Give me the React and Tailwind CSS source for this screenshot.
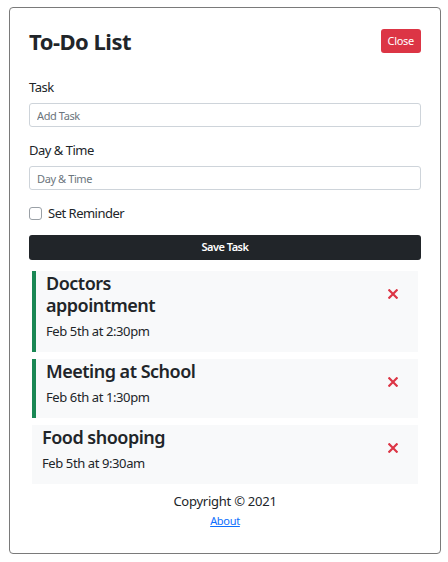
import { useState } from 'react'

const TASKS = [
  { id: 1, text: 'Doctors appointment', day: 'Feb 5th at 2:30pm', reminder: true },
  { id: 2, text: 'Meeting at School', day: 'Feb 6th at 1:30pm', reminder: true },
  { id: 3, text: 'Food shooping', day: 'Feb 5th at 9:30am', reminder: false },
]

function XIcon() {
  return (
    <svg width="10" height="10" viewBox="0 0 10 10" className="block shrink-0">
      <path d="M1.3 1.3 L8.7 8.7 M8.7 1.3 L1.3 8.7" stroke="#dc3545" strokeWidth="2.2" strokeLinecap="square" />
    </svg>
  )
}

function Task({ task }) {
  return (
    <div className={`flex justify-between items-start bg-[#f8f9fa] mx-[3px] pr-[20px] pt-[1px] pb-[11px] pl-[10px] ${task.reminder ? 'border-l-4 border-[#198754]' : ''}`}>
      <div>
        <h3 className="text-[18px] leading-[22px] font-semibold text-[#212529] tracking-[-0.5px] max-w-[160px]">{task.text}</h3>
        <p className="text-[13px] leading-[20px] text-[#212529] tracking-[-0.4px] mt-[5px]">{task.day}</p>
      </div>
      <div className="mt-[17px]"><XIcon /></div>
    </div>
  )
}

export default function App() {
  const [reminder, setReminder] = useState(false)
  const inputClass = 'w-full h-[24px] border border-[#ced4da] rounded-[3px] px-[7px] text-[11px] tracking-[-0.4px] text-[#212529] placeholder-[#6c757d] focus:outline-none'
  const labelClass = 'block text-[13px] leading-[20px] tracking-[-0.5px] text-[#212529]'

  return (
    <div className="pl-[9px] pt-[7px] bg-white min-h-[562px]" style={{ fontFamily: '"Noto Sans", "Open Sans", sans-serif' }}>
      <div className="w-[432px] h-[547px] border border-[#7a7a7a] rounded-[4px] px-[19px] pt-[21px]">
        {/* Header */}
        <div className="flex justify-between items-center">
          <h1 className="text-[22px] font-bold text-[#212529] leading-[24px] tracking-[-0.5px]">To-Do List</h1>
          <button className="bg-[#dc3545] text-white text-[11px] tracking-[-0.3px] h-[24px] px-[7px] rounded-[3px]">Close</button>
        </div>

        {/* Form */}
        <div className="mt-[24px]">
          <label className={labelClass}>Task</label>
          <input type="text" placeholder="Add Task" className={`${inputClass} mt-[6px]`} />
        </div>
        <div className="mt-[13px]">
          <label className={labelClass}>Day &amp; Time</label>
          <input type="text" placeholder="Day & Time" className={`${inputClass} mt-[6px]`} />
        </div>
        <label className="flex items-center gap-[6px] mt-[13px] cursor-pointer">
          <input type="checkbox" checked={reminder} onChange={e => setReminder(e.target.checked)}
            className="appearance-none w-[13px] h-[13px] border border-[#9aa0a6] rounded-[3px] bg-white" />
          <span className="text-[13px] leading-[20px] tracking-[-0.5px] text-[#212529]">Set Reminder</span>
        </label>
        <button className="w-full h-[25px] mt-[12px] bg-[#212529] text-white text-[11px] tracking-[-0.5px] font-semibold rounded-[3px]">Save Task</button>

        {/* Tasks */}
        <div className="mt-[11px] flex flex-col gap-[7px]">
          {TASKS.map(t => <Task key={t.id} task={t} />)}
        </div>

        {/* Footer */}
        <div className="text-center mt-[7px]">
          <p className="text-[13px] leading-[20px] tracking-[-0.25px] text-[#212529]">Copyright © 2021</p>
          <a href="#" className="block text-[11px] text-[#0d6efd] underline leading-[20px] tracking-[-0.3px]">About</a>
        </div>
      </div>
    </div>
  )
}
